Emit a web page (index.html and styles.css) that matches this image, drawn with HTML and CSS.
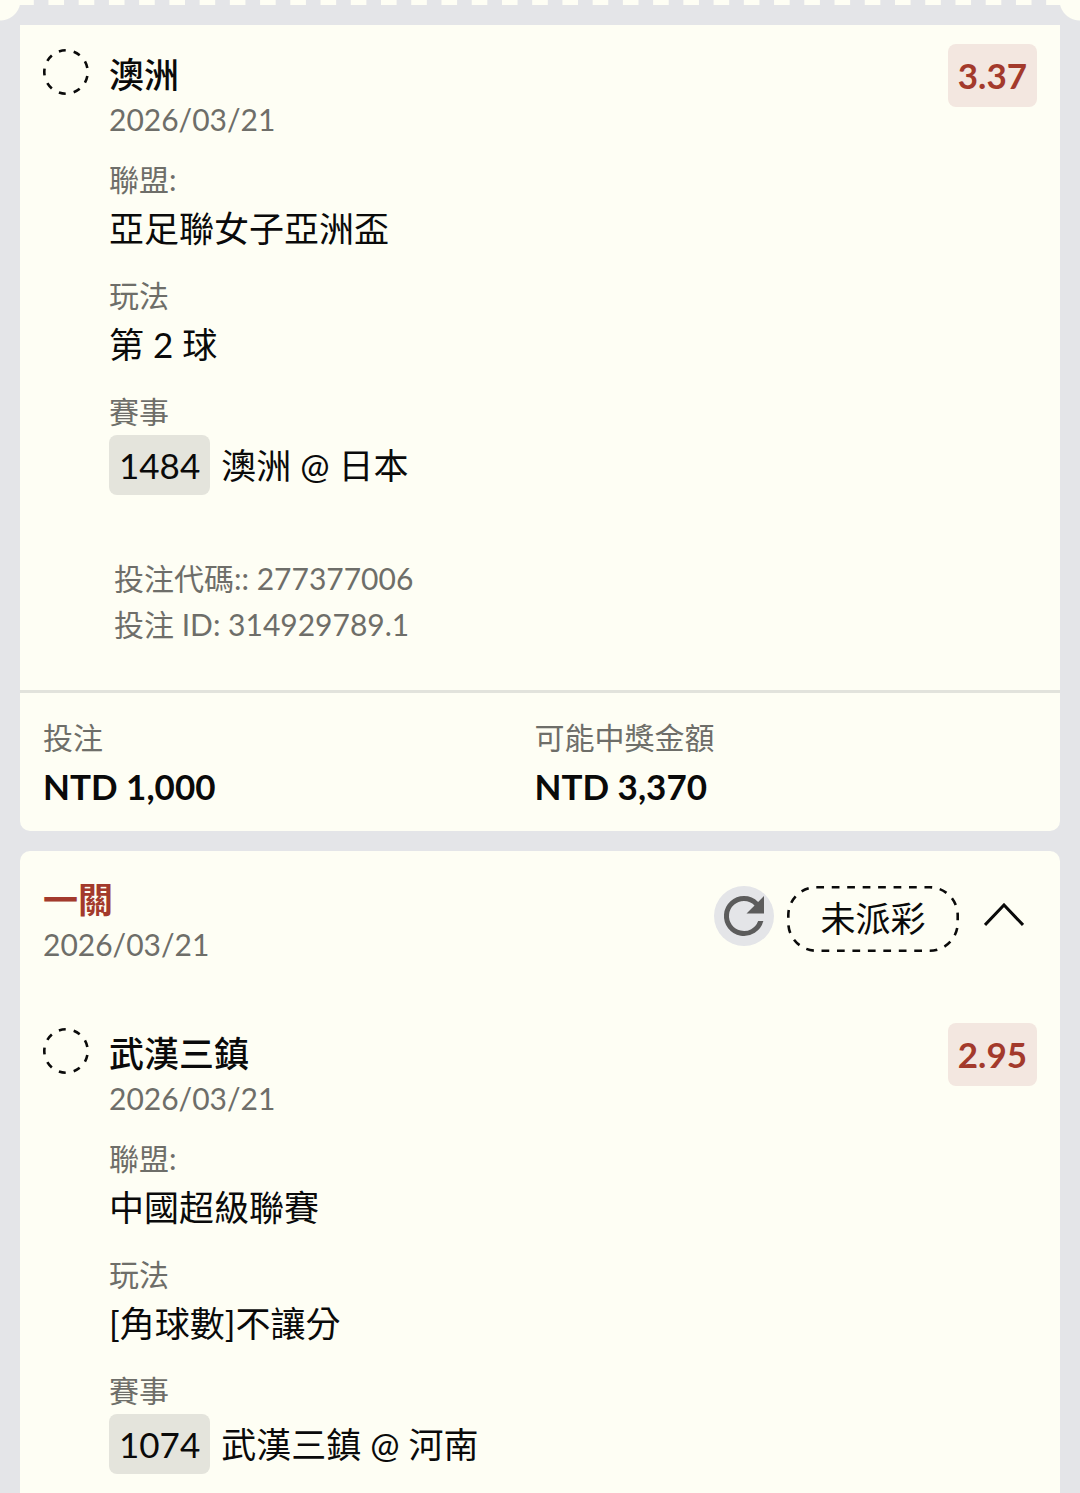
FILE: index.html
```html
<!DOCTYPE html>
<html lang="zh-Hant">
<head>
    <meta charset="UTF-8">
    <meta name="viewport" content="width=device-width, initial-scale=1.0">
    <title>投注紀錄</title>
    <link rel="stylesheet" href="styles.css">
</head>
<body>
    <div class="tear"><div class="tear-line"></div></div>
    <main>
        <article class="ticket ticket-torn">
            <section class="pick">
                <svg class="pick-status" viewBox="0 0 46 46" aria-hidden="true">
                    <circle cx="23" cy="23" r="21.7" pathLength="90"/>
                </svg>
                <div class="pick-info">
                    <h2>澳洲</h2>
                    <p class="date">2026/03/21</p>
                    <dl>
                        <dt>聯盟:</dt>
                        <dd>亞足聯女子亞洲盃</dd>
                        <dt>玩法</dt>
                        <dd>第 2 球</dd>
                        <dt>賽事</dt>
                        <dd class="match"><span class="match-no">1484</span>澳洲 @ 日本</dd>
                    </dl>
                    <div class="codes">
                        <p>投注代碼:: 277377006</p>
                        <p>投注 ID: 314929789.1</p>
                    </div>
                </div>
                <span class="odds">3.37</span>
            </section>
            <dl class="totals">
                <div>
                    <dt>投注</dt>
                    <dd>NTD 1,000</dd>
                </div>
                <div>
                    <dt>可能中獎金額</dt>
                    <dd>NTD 3,370</dd>
                </div>
            </dl>
        </article>

        <article class="ticket ticket-last">
            <header class="ticket-header">
                <div class="ticket-title">
                    <h1>一關</h1>
                    <p class="date">2026/03/21</p>
                </div>
                <div class="ticket-controls">
                    <button type="button" class="refresh" aria-label="重新整理">
                        <svg viewBox="0 0 24 24" aria-hidden="true">
                            <path d="M17.65 6.35A7.96 7.96 0 0 0 12 4a8 8 0 1 0 7.73 10h-2.08A6 6 0 1 1 12 6c1.66 0 3.14.69 4.22 1.78L13 11h7V4z"/>
                        </svg>
                    </button>
                    <span class="state">
                        <svg class="state-outline" viewBox="0 0 172 66" aria-hidden="true">
                            <rect x="1.3" y="1.3" width="169.4" height="63.4" rx="28" pathLength="270"/>
                        </svg>
                        未派彩
                    </span>
                    <button type="button" class="toggle" aria-label="收合">
                        <svg viewBox="0 0 40 24" aria-hidden="true">
                            <path d="M1 22L20 2l19 20"/>
                        </svg>
                    </button>
                </div>
            </header>
            <section class="pick">
                <svg class="pick-status" viewBox="0 0 46 46" aria-hidden="true">
                    <circle cx="23" cy="23" r="21.7" pathLength="90"/>
                </svg>
                <div class="pick-info">
                    <h2>武漢三鎮</h2>
                    <p class="date">2026/03/21</p>
                    <dl>
                        <dt>聯盟:</dt>
                        <dd>中國超級聯賽</dd>
                        <dt>玩法</dt>
                        <dd>[角球數]不讓分</dd>
                        <dt>賽事</dt>
                        <dd class="match"><span class="match-no">1074</span>武漢三鎮 @ 河南</dd>
                    </dl>
                </div>
                <span class="odds">2.95</span>
            </section>
        </article>
    </main>
</body>
</html>
```

FILE: styles.css
```css
* {
    box-sizing: border-box;
}
body {
    font-family: Lato, "Noto Sans CJK TC", sans-serif;
    font-size: 35px;
    margin: 0;
    min-height: 100vh;
    display: flex;
    flex-direction: column;
    background-color: #e4e5e8;
    color: #0a0a0a;
}
h1, h2, p, dl, dd {
    margin: 0;
}
button {
    border: 0;
    padding: 0;
    background: none;
    cursor: pointer;
}

/* perforated edge */
.tear {
    height: 25px;
    background:
        radial-gradient(circle at 0 0, #fefef4 20px, transparent 21px),
        radial-gradient(circle at 100% 0, #fefef4 20px, transparent 21px);
}
.tear-line {
    height: 5px;
    margin: 0 18px;
    border: solid #fefef4;
    border-width: 0 8px;
    background-image: linear-gradient(90deg, #fefef4 25%, transparent 25%, transparent 75%, #fefef4 75%);
    background-size: 30px 5px;
    background-repeat: round;
}

main {
    flex: 1;
    display: flex;
    flex-direction: column;
    gap: 20px;
    padding: 0 20px;
}
.ticket {
    background-color: #fefef4;
    border-radius: 10px;
}
.ticket-torn {
    border-radius: 0 0 10px 10px;
}
.ticket-last {
    flex: 1;
    border-radius: 10px 10px 0 0;
}

.ticket-header {
    display: flex;
    align-items: flex-start;
    padding: 23px 24px 40px 23px;
}
.ticket-title {
    flex: 1;
}
h1, h2 {
    font-size: 35px;
    line-height: 50px;
}
h1 {
    font-weight: 600;
    color: #a33a2c;
}
h2 {
    font-weight: 500;
}
.date {
    font-size: 30px;
    line-height: 40px;
    color: #6e6e69;
}
.ticket-controls {
    display: flex;
    gap: 13px;
    padding-top: 12px;
}
.refresh {
    width: 60px;
    height: 60px;
    border-radius: 50%;
    background-color: #e4e5e8;
}
.refresh svg {
    display: block;
    fill: #5c5c5c;
}
.state {
    position: relative;
    display: flex;
    align-items: center;
    justify-content: center;
    width: 172px;
    height: 66px;
    padding-bottom: 6px;
}
.state-outline {
    position: absolute;
    inset: 0;
    fill: none;
    stroke: #0a0a0a;
    stroke-width: 2.6;
    stroke-dasharray: 5 5;
}
.toggle {
    width: 64px;
    height: 60px;
}
.toggle svg {
    width: 40px;
    fill: none;
    stroke: #0a0a0a;
    stroke-width: 3;
}

.pick {
    display: flex;
    align-items: flex-start;
    padding: 19px 23px 0;
}
.pick-status {
    width: 46px;
    margin-top: 5px;
    fill: none;
    stroke: #0a0a0a;
    stroke-width: 2.6;
    stroke-dasharray: 4.6 5.4;
    stroke-dashoffset: -2.7;
}
.pick-info {
    flex: 1;
    padding: 5px 0 0 20px;
}
dt {
    font-size: 30px;
    line-height: 44px;
    color: #6e6e69;
}
dd {
    line-height: 54px;
}
.pick dt {
    margin-top: 18px;
}
.match {
    display: flex;
    align-items: center;
    gap: 11px;
    padding-top: 2px;
    line-height: 60px;
}
.match-no {
    padding: 0 10px;
    border-radius: 8px;
    background-color: #e4e4dc;
}
.odds {
    padding: 0 10px;
    border-radius: 8px;
    background-color: #f3e7e0;
    color: #a33a2c;
    font-weight: 700;
    line-height: 63px;
}
.codes {
    padding: 60px 0 43px 5px;
    font-size: 30px;
    line-height: 46px;
    color: #6e6e69;
}

.totals {
    display: grid;
    grid-template-columns: 1fr 1fr;
    padding: 22px 34px 18px 23px;
    border-top: 3px solid #e2e3dc;
}
.totals dd {
    font-weight: 700;
}
```
